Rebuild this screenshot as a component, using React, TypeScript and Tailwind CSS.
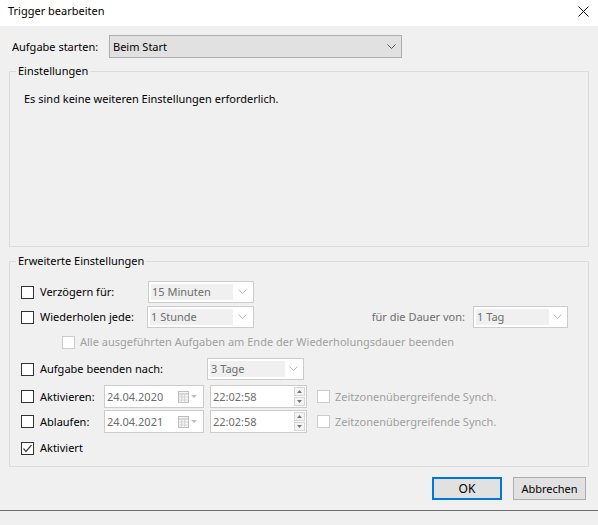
import React from 'react';

const font = { fontFamily: '"Noto Sans", "Segoe UI", sans-serif' };

function Check({ checked = false, disabled = false }: { checked?: boolean; disabled?: boolean }) {
  return (
    <span
      className={`flex h-[13px] w-[13px] shrink-0 items-center justify-center border bg-white ${
        disabled ? 'border-[#cccccc]' : 'border-[#333333]'
      }`}
    >
      {checked && (
        <svg width="11" height="11" viewBox="0 0 11 11">
          <polyline points="1.5,5.5 4,8.5 9.5,2" fill="none" stroke="#444" strokeWidth="1.2" />
        </svg>
      )}
    </span>
  );
}

function Chevron({ color = '#555' }: { color?: string }) {
  return (
    <svg width="9" height="6" viewBox="0 0 9 6">
      <polyline points="0.5,0.5 4.5,4.5 8.5,0.5" fill="none" stroke={color} strokeWidth="1" />
    </svg>
  );
}

function DisabledCombo({ value, width, fill }: { value: string; width: string; fill: string }) {
  return (
    <div className={`flex h-[22px] ${width} items-center border border-[#cccccc] bg-white p-[2px]`}>
      <div className={`flex h-full ${fill} items-center bg-[#f0f0f0] pl-[1px] text-[#6d6d6d]`}>{value}</div>
      <div className="flex flex-1 items-center justify-center">
        <Chevron color="#bdbdbd" />
      </div>
    </div>
  );
}

function CalIcon() {
  return (
    <svg width="20" height="12" viewBox="0 0 20 12">
      <rect x="0.5" y="0.5" width="10" height="11" fill="#f4f4f4" stroke="#bdbdbd" />
      <line x1="0.5" y1="3" x2="10.5" y2="3" stroke="#bdbdbd" />
      <line x1="3.5" y1="3" x2="3.5" y2="11.5" stroke="#d6d6d6" />
      <line x1="6.5" y1="3" x2="6.5" y2="11.5" stroke="#d6d6d6" />
      <line x1="0.5" y1="6" x2="10.5" y2="6" stroke="#d6d6d6" />
      <line x1="0.5" y1="9" x2="10.5" y2="9" stroke="#d6d6d6" />
      <polygon points="13,4 19,4 16,7" fill="#bdbdbd" />
    </svg>
  );
}

function DateField({ value }: { value: string }) {
  return (
    <div className="flex h-[23px] w-[100px] items-center justify-between border border-[#cccccc] bg-white pl-[2px] pr-[5px] text-[#6d6d6d]">
      <span>{value}</span>
      <CalIcon />
    </div>
  );
}

function TimeField({ value }: { value: string }) {
  return (
    <div className="flex h-[23px] w-[97px] items-center justify-between border border-[#cccccc] bg-white pl-[2px] pr-[1px] text-[#6d6d6d]">
      <span>{value}</span>
      <div className="flex flex-col gap-[1px]">
        <div className="flex h-[9px] w-[11px] items-center justify-center border border-[#d6d6d6] bg-[#f4f4f4]">
          <svg width="5" height="3" viewBox="0 0 5 3">
            <polygon points="0,3 5,3 2.5,0" fill="#777" />
          </svg>
        </div>
        <div className="flex h-[9px] w-[11px] items-center justify-center border border-[#d6d6d6] bg-[#f4f4f4]">
          <svg width="5" height="3" viewBox="0 0 5 3">
            <polygon points="0,0 5,0 2.5,3" fill="#777" />
          </svg>
        </div>
      </div>
    </div>
  );
}

export default function App() {
  return (
    <div className="flex h-[525px] w-[598px] flex-col bg-[#f0f0f0] text-[11px] leading-[16px] text-black" style={font}>
      <div className="flex h-[26px] shrink-0 items-center justify-between bg-white pl-[8px] pr-[9px]">
        <span className="-mt-[4px]">Trigger bearbeiten</span>
        <svg width="11" height="11" viewBox="0 0 11 11" className="-mt-[4px]">
          <path d="M0.5 0.5 L10.5 10.5 M10.5 0.5 L0.5 10.5" stroke="#111" strokeWidth="1" />
        </svg>
      </div>

      <div className="px-[9px] pt-[9px]">
        <div className="flex h-[23px] items-center">
          <span className="w-[100px] pl-[3px]">Aufgabe starten:</span>
          <div className="flex h-[23px] w-[293px] items-center justify-between border border-[#adadad] bg-[#e1e1e1] pl-[3px] pr-[5px]">
            <span>Beim Start</span>
            <Chevron />
          </div>
        </div>

        <fieldset className="mt-[5px] h-[184px] border border-[#dcdcdc]">
          <legend className="ml-[6px] px-[2px] leading-[16px]">Einstellungen</legend>
          <p className="mt-[12px] pl-[14px]">Es sind keine weiteren Einstellungen erforderlich.</p>
        </fieldset>

        <fieldset className="mt-[6px] h-[214px] border border-[#dcdcdc]">
          <legend className="ml-[6px] px-[2px] leading-[16px]">Erweiterte Einstellungen</legend>
          <div className="flex flex-col pl-[11px] pr-[20px]">
            <div className="mt-[12px] flex h-[22px] items-center">
              <Check />
              <span className="ml-[6px] w-[108px]">Verzögern für:</span>
              <DisabledCombo value="15 Minuten" width="w-[106px]" fill="w-[82px]" />
            </div>
            <div className="mt-[3px] flex h-[22px] items-center">
              <Check />
              <span className="ml-[6px] w-[107px]">Wiederholen jede:</span>
              <DisabledCombo value="1 Stunde" width="w-[107px]" fill="w-[83px]" />
              <span className="ml-auto mr-[8px] text-[#6d6d6d]">für die Dauer von:</span>
              <DisabledCombo value="1 Tag" width="w-[95px]" fill="w-[73px]" />
            </div>
            <div className="mt-[6px] flex h-[16px] items-center pl-[41px]">
              <Check disabled />
              <span className="ml-[5px] text-[#a0a0a0]">Alle ausgeführten Aufgaben am Ende der Wiederholungsdauer beenden</span>
            </div>
            <div className="mt-[8px] flex h-[22px] items-center">
              <Check />
              <span className="ml-[6px] w-[167px]">Aufgabe beenden nach:</span>
              <DisabledCombo value="3 Tage" width="w-[97px]" fill="w-[75px]" />
            </div>
            <div className="mt-[5px] flex h-[23px] items-center">
              <Check />
              <span className="ml-[6px] w-[64px]">Aktivieren:</span>
              <DateField value="24.04.2020" />
              <div className="ml-[6px]">
                <TimeField value="22:02:58" />
              </div>
              <div className="ml-[10px]">
                <Check disabled />
              </div>
              <span className="ml-[5px] text-[#a0a0a0]">Zeitzonenübergreifende Synch.</span>
            </div>
            <div className="mt-[2px] flex h-[23px] items-center">
              <Check />
              <span className="ml-[6px] w-[64px]">Ablaufen:</span>
              <DateField value="24.04.2021" />
              <div className="ml-[6px]">
                <TimeField value="22:02:58" />
              </div>
              <div className="ml-[10px]">
                <Check disabled />
              </div>
              <span className="ml-[5px] text-[#a0a0a0]">Zeitzonenübergreifende Synch.</span>
            </div>
            <div className="mt-[7px] flex h-[16px] items-center">
              <Check checked />
              <span className="ml-[6px]">Aktiviert</span>
            </div>
          </div>
        </fieldset>

        <div className="mt-[10px] flex justify-end gap-[11px] pr-[3px]">
          <button className="h-[23px] w-[70px] border-2 border-[#0078d7] bg-[#e1e1e1] text-[12px]">OK</button>
          <button className="h-[23px] w-[73px] border border-[#adadad] bg-[#e1e1e1]">Abbrechen</button>
        </div>
      </div>

      <div className="mt-auto h-[15px] border-t border-[#6d6d6d] bg-[#f0f0f0]" />
    </div>
  );
}
